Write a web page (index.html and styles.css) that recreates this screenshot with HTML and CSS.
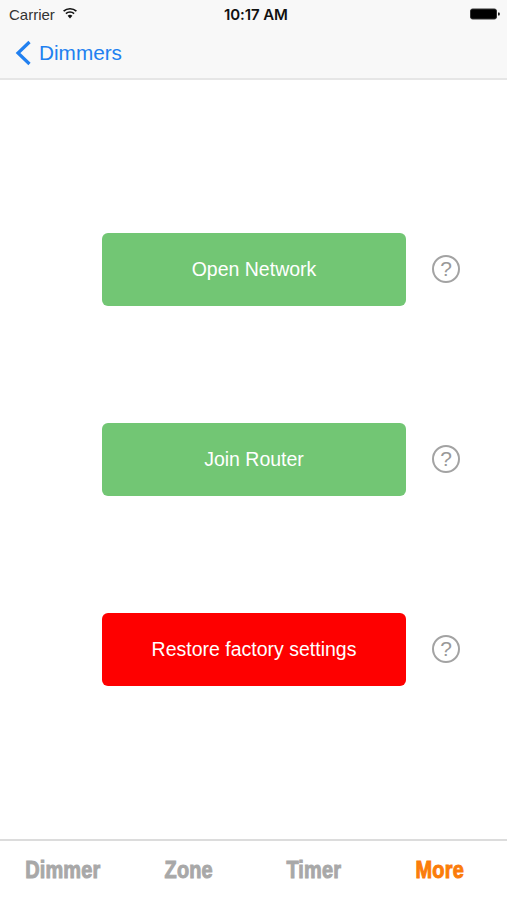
FILE: index.html
```html
<!DOCTYPE html>
<html lang="en">
<head>
<meta charset="utf-8">
<title>Dimmers</title>
<link rel="stylesheet" href="styles.css">
</head>
<body>
<div class="screen">
  <header class="top">
    <div class="status">
      <div class="status-left">
        <span class="carrier">Carrier</span>
        <svg class="wifi" width="16" height="12" viewBox="0 0 16 12"><path d="M8 11.5 5.6 8.7a3.6 3.6 0 0 1 4.8 0Z" fill="#111"/><path d="M3.9 6.6a6 6 0 0 1 8.2 0" fill="none" stroke="#111" stroke-width="1.6"/><path d="M1.6 4.2a9.4 9.4 0 0 1 12.8 0" fill="none" stroke="#111" stroke-width="1.6"/></svg>
      </div>
      <span class="time">10:17 AM</span>
      <svg class="battery" width="30" height="12" viewBox="0 0 30 12"><rect x="0.5" y="1" width="26" height="10" rx="2" fill="#000" stroke="#333"/><path d="M28 4.5h1a.8.8 0 0 1 .8.8v1.4a.8.8 0 0 1-.8.8h-1Z" fill="#222"/></svg>
    </div>
    <nav class="nav">
      <svg class="chevron" width="18" height="26" viewBox="0 0 18 26"><path d="M15.5 2 4 13 15.5 24" fill="none" stroke="#2180f0" stroke-width="3.2"/></svg>
      <span class="back">Dimmers</span>
    </nav>
  </header>
  <main class="actions">
    <div class="row">
      <button class="btn green">Open Network</button>
      <span class="help">?</span>
    </div>
    <div class="row">
      <button class="btn green">Join Router</button>
      <span class="help">?</span>
    </div>
    <div class="row">
      <button class="btn red">Restore factory settings</button>
      <span class="help">?</span>
    </div>
  </main>
  <footer class="tabs">
    <span class="tab">Dimmer</span>
    <span class="tab">Zone</span>
    <span class="tab">Timer</span>
    <span class="tab active">More</span>
  </footer>
</div>
</body>
</html>
```
FILE: styles.css
```css
* { box-sizing: border-box; }
html, body { margin: 0; padding: 0; }
body { font-family: "Liberation Sans", Arial, sans-serif; background: #fff; }
.screen { width: 507px; height: 900px; display: flex; flex-direction: column; overflow: hidden; }
.top { height: 80px; background: #f8f8f8; border-bottom: 2px solid #e6e6e6; }
.status { height: 28px; padding: 0 7px 0 9px; display: flex; align-items: center; justify-content: space-between; position: relative; }
.status-left { display: flex; align-items: center; gap: 7px; }
.carrier { font-size: 15px; color: #333; }
.wifi { margin-top: -3px; }
.time { font-family: Inter, "Liberation Sans", sans-serif; font-size: 15px; font-weight: 600; letter-spacing: -0.1px; color: #111; position: absolute; left: 224px; top: 5px; }
.nav { height: 50px; padding: 0 0 0 14px; display: flex; align-items: center; gap: 7px; }
.back { font-size: 20.75px; color: #2180f0; }
.actions { flex: 1; padding-top: 153px; display: flex; flex-direction: column; gap: 116.5px; }
.row { height: 73.5px; padding-left: 102px; display: flex; align-items: center; gap: 26px; }
.btn { width: 304px; height: 73px; border: 0; border-radius: 6px; color: #fff; font: 400 19.5px "Liberation Sans", Arial, sans-serif; padding: 0; }
.green { background: #72c674; }
.red { background: #fe0000; }
.help { width: 28px; height: 28px; margin-bottom: 2px; border: 2px solid #a3a3a3; border-radius: 50%; color: #999; font-size: 21px; line-height: 24px; text-align: center; }
.tabs { height: 61px; border-top: 2px solid #dcdcdc; display: flex; align-items: center; padding-bottom: 2px; }
.tab { width: 125.5px; text-align: center; font-weight: 700; font-size: 24px; letter-spacing: 0.2px; color: #a8a8a8; -webkit-text-stroke: 1px currentColor; transform: scaleX(0.83); }
.active { color: #fb7c0a; }
```
